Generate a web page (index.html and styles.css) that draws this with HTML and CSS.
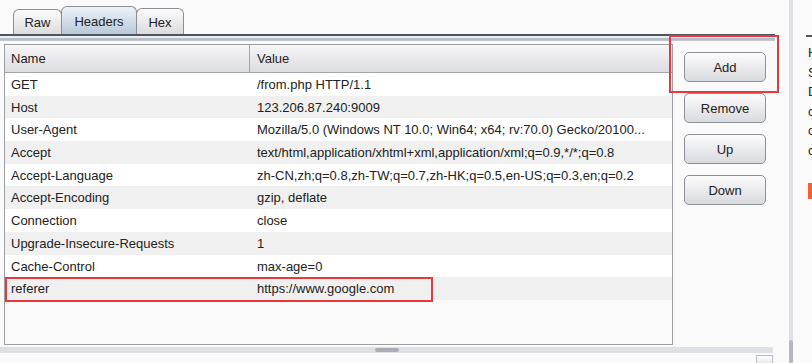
FILE: index.html
```html
<!DOCTYPE html>
<html lang="en">
<head>
    <meta charset="UTF-8">
    <title>Request Headers</title>
    <link rel="stylesheet" href="styles.css">
</head>
<body>
    <div class="app">
        <!-- Main editor panel -->
        <div class="main">
            <div class="tabs">
                <div class="tab tab-raw">Raw</div>
                <div class="tab tab-active">Headers</div>
                <div class="tab tab-hex">Hex</div>
            </div>
            <div class="tab-line"></div>
            <div class="pane-edge"></div>

            <div class="content">
                <!-- Headers table -->
                <div class="grid">
                    <div class="grid-head">
                        <div class="cell name">Name</div>
                        <div class="cell value">Value</div>
                    </div>
                    <div class="row"><div class="cell name">GET</div><div class="cell value">/from.php HTTP/1.1</div></div>
                    <div class="row alt"><div class="cell name">Host</div><div class="cell value">123.206.87.240:9009</div></div>
                    <div class="row"><div class="cell name">User-Agent</div><div class="cell value">Mozilla/5.0 (Windows NT 10.0; Win64; x64; rv:70.0) Gecko/20100...</div></div>
                    <div class="row alt"><div class="cell name">Accept</div><div class="cell value">text/html,application/xhtml+xml,application/xml;q=0.9,*/*;q=0.8</div></div>
                    <div class="row"><div class="cell name">Accept-Language</div><div class="cell value">zh-CN,zh;q=0.8,zh-TW;q=0.7,zh-HK;q=0.5,en-US;q=0.3,en;q=0.2</div></div>
                    <div class="row alt"><div class="cell name">Accept-Encoding</div><div class="cell value">gzip, deflate</div></div>
                    <div class="row"><div class="cell name">Connection</div><div class="cell value">close</div></div>
                    <div class="row alt"><div class="cell name">Upgrade-Insecure-Requests</div><div class="cell value">1</div></div>
                    <div class="row"><div class="cell name">Cache-Control</div><div class="cell value">max-age=0</div></div>
                    <div class="row alt"><div class="cell name">referer</div><div class="cell value">https://www.google.com</div></div>
                    <div class="mark mark-row"></div>
                </div>

                <!-- Action buttons -->
                <div class="buttons">
                    <button class="btn">Add</button>
                    <button class="btn">Remove</button>
                    <button class="btn">Up</button>
                    <button class="btn">Down</button>
                </div>
            </div>

            <div class="hscroll"><div class="hscroll-thumb"></div></div>
            <div class="corner-btn"></div>
            <div class="mark mark-add"></div>
        </div>

        <div class="divider"><div class="vthumb"></div></div>

        <!-- Side panel, mostly scrolled out of view -->
        <div class="side">
            <div class="side-line"></div>
            <div class="side-text">
                <div>H</div>
                <div>S</div>
                <div>D</div>
                <div>c</div>
                <div>c</div>
                <div>c</div>
            </div>
            <div class="side-badge"></div>
        </div>
    </div>
</body>
</html>
```

FILE: styles.css
```css
/* General styling */
* {
    margin: 0;
    padding: 0;
    box-sizing: border-box;
}
body {
    font-family: 'Liberation Sans', Arial, sans-serif;
    font-size: 13px;
    color: #222;
    background-color: #fafafa;
    overflow: hidden;
}
.app {
    display: flex;
    height: 363px;
}

/* Main panel */
.main {
    position: relative;
    width: 789px;
}

/* Tabs */
.tabs {
    display: flex;
    align-items: flex-end;
    height: 34px;
    padding-left: 13px;
}
.tab {
    display: flex;
    align-items: center;
    justify-content: center;
    border: 1px solid #8a8e95;
    border-bottom: none;
    border-radius: 6px 6px 0 0;
    background: linear-gradient(#fbfbfb, #dcdcde);
    height: 25px;
}
.tab-raw {
    width: 49px;
}
.tab-active {
    width: 76px;
    height: 28px;
    margin-left: -1px;
    padding-top: 2px;
    background: linear-gradient(#eef2f6, #b9c9da);
    z-index: 1;
}
.tab-hex {
    width: 48px;
    height: 26px;
    margin-left: -1px;
    padding-top: 1px;
}
.tab-line {
    width: 775px;
    height: 2px;
    background-color: #50555e;
}
.pane-edge {
    width: 775px;
    height: 5px;
    border-top: 2px solid #eceef1;
    border-bottom: 1px solid #c4c6ca;
    background-color: #b3bfcd;
}

/* Table */
.content {
    display: flex;
    padding: 3px 0 0 4px;
}
.grid {
    position: relative;
    width: 669px;
    height: 301px;
    border: 1px solid #9c9ea2;
    background-color: #fafafa;
}
.grid-head {
    display: flex;
    height: 28px;
    background: linear-gradient(#f6f6f8, #dcdde2);
    border-bottom: 1px solid #a4a6aa;
}
.grid-head .cell {
    line-height: 27px;
}
.grid-head .name {
    border-right: 1px solid #a4a6aa;
}
.row {
    display: flex;
    height: 22.7px;
    background-color: #ffffff;
}
.row.alt {
    background-color: #f0f0f0;
}
.cell {
    white-space: nowrap;
    overflow: hidden;
}
.row .cell {
    padding-top: 2px;
    line-height: 20.7px;
}
.cell.name {
    width: 245px;
    padding-left: 6px;
}
.cell.value {
    flex: 1;
    padding-left: 7px;
}

/* Red highlights */
.mark {
    position: absolute;
    border: 2px solid #e8383c;
}
.mark-row {
    left: 0;
    top: 232px;
    width: 428px;
    height: 25px;
}
.mark-add {
    left: 669px;
    top: 35px;
    width: 110px;
    height: 58px;
}

/* Buttons */
.buttons {
    display: flex;
    flex-direction: column;
    gap: 11px;
    margin-left: 11px;
    padding-top: 8px;
}
.btn {
    width: 82px;
    height: 30px;
    font-family: inherit;
    font-size: 13px;
    color: #222;
    border: 1px solid #8d9096;
    border-radius: 5px;
    background: linear-gradient(#fcfcfc, #d9dadf);
}

/* Scroll bars */
.hscroll {
    position: relative;
    width: 773px;
    height: 6px;
    margin-top: 2px;
    background-color: #dde0e5;
}
.hscroll-thumb {
    position: absolute;
    left: 375px;
    top: 1px;
    width: 24px;
    height: 4px;
    border-radius: 2px;
    background-color: #a9aeb6;
}
.corner-btn {
    position: absolute;
    left: 756px;
    top: 355px;
    width: 17px;
    height: 10px;
    border: 1px solid #b8bbc0;
    background: linear-gradient(#ffffff, #e4e5e8);
}
.divider {
    position: relative;
    width: 4px;
    background-color: #e0e1e4;
}
.vthumb {
    position: absolute;
    left: 0;
    bottom: 0;
    width: 4px;
    height: 23px;
    border-radius: 2px;
    background-color: #b4b8be;
}

/* Side panel */
.side {
    flex: 1;
    overflow: hidden;
    padding-left: 13px;
    padding-top: 35px;
}
.side-line {
    height: 2px;
    background-color: #50555e;
}
.side-text {
    padding: 6px 0 0 2px;
    line-height: 19.5px;
}
.side-badge {
    margin: 23px 0 0 2px;
    width: 20px;
    height: 16px;
    background-color: #f06232;
}
```
